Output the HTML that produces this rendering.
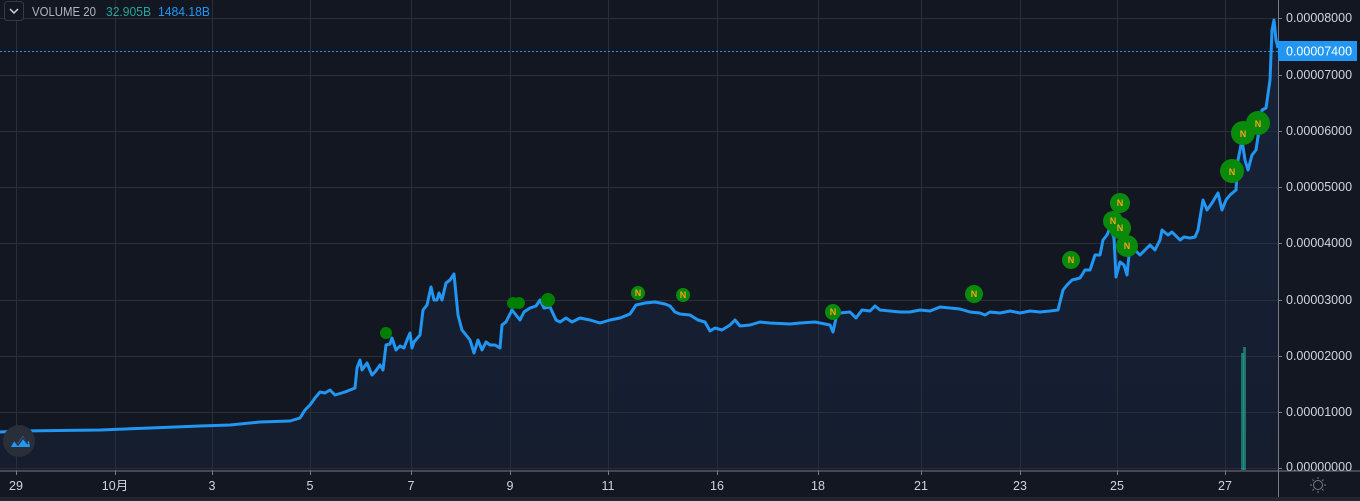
<!DOCTYPE html>
<html><head><meta charset="utf-8"><style>
html,body{margin:0;padding:0;background:#131722;width:1360px;height:501px;overflow:hidden}
svg{display:block}
text{font-family:"Liberation Sans","Noto Sans CJK JP",sans-serif}
</style></head><body>
<svg width="1360" height="501" viewBox="0 0 1360 501" xmlns="http://www.w3.org/2000/svg">
<defs>
<linearGradient id="g" x1="0" y1="0" x2="0" y2="1">
<stop offset="0" stop-color="#17233a"/>
<stop offset="1" stop-color="#151d2e"/>
</linearGradient>
</defs>
<rect width="1360" height="501" fill="#131722"/>
<path id="p" fill="url(#g)" d="M0,432 L20,431 100,430 150,428 200,426 230,425 260,422 290,421 300,418 305,410 310,405 315,398 320,392 325,393 330,390 335,395 345,392 355,388 357,368 360,360 362,370 367,363 372,375 375,372 380,365 383,370 386,345 390,344 392,338 396,350 400,346 404,348 407,340 410,333 412,348 414,342 420,335 423,310 427,305 431,287 434,300 437,300 439,293 442,300 446,283 450,280 454,274 458,315 462,330 466,335 470,340 474,353 478,340 482,350 486,342 490,345 495,345 500,348 502,325 506,322 512,310 516,315 520,320 524,312 530,308 536,306 540,300 544,308 550,307 556,320 560,322 566,318 572,322 580,318 590,320 600,323 610,320 620,318 630,314 636,305 645,303 655,302 665,304 670,306 675,312 680,314 690,315 698,320 705,322 710,331 715,328 722,330 730,325 735,320 740,326 750,325 760,322 770,323 790,324 800,323 815,322 830,325 833,332 836,318 840,313 850,312 856,318 862,310 870,311 875,306 880,310 890,311 900,312 910,312 920,310 930,311 940,307 950,308 960,309 970,312 980,313 985,315 990,312 1000,313 1010,311 1020,313 1030,311 1040,312 1050,311 1058,310 1063,290 1067,285 1072,280 1080,278 1085,270 1090,270 1095,255 1100,255 1103,240 1107,235 1110,228 1112,232 1114,238 1116,277 1120,262 1124,265 1127,275 1130,245 1135,250 1140,255 1145,250 1150,245 1155,250 1160,240 1162,230 1168,235 1172,232 1177,237 1180,240 1184,237 1190,238 1195,237 1198,230 1203,200 1207,210 1212,203 1218,193 1222,210 1226,200 1230,195 1236,190 1238,160 1242,140 1245,160 1248,170 1252,155 1256,150 1262,110 1266,108 1270,80 1272,30 1274,20 1276,40 1278,48 L1278,470 L0,470 Z"/>
<g stroke="#2a2e39" stroke-width="1">
<line x1="16.5" y1="0" x2="16.5" y2="471"/><line x1="115.5" y1="0" x2="115.5" y2="471"/><line x1="212.5" y1="0" x2="212.5" y2="471"/><line x1="310.5" y1="0" x2="310.5" y2="471"/><line x1="411.5" y1="0" x2="411.5" y2="471"/><line x1="510.5" y1="0" x2="510.5" y2="471"/><line x1="608.5" y1="0" x2="608.5" y2="471"/><line x1="717.5" y1="0" x2="717.5" y2="471"/><line x1="818.5" y1="0" x2="818.5" y2="471"/><line x1="921.5" y1="0" x2="921.5" y2="471"/><line x1="1020.5" y1="0" x2="1020.5" y2="471"/><line x1="1117.5" y1="0" x2="1117.5" y2="471"/><line x1="1225.5" y1="0" x2="1225.5" y2="471"/>
<line x1="0" y1="18.5" x2="1278" y2="18.5"/><line x1="0" y1="75.5" x2="1278" y2="75.5"/><line x1="0" y1="131.5" x2="1278" y2="131.5"/><line x1="0" y1="187.5" x2="1278" y2="187.5"/><line x1="0" y1="243.5" x2="1278" y2="243.5"/><line x1="0" y1="300.5" x2="1278" y2="300.5"/><line x1="0" y1="356.5" x2="1278" y2="356.5"/><line x1="0" y1="412.5" x2="1278" y2="412.5"/><line x1="0" y1="468.5" x2="1278" y2="468.5"/>
</g>
<polyline fill="none" stroke="#2196f3" stroke-width="3" stroke-linejoin="round" points="0,432 20,431 100,430 150,428 200,426 230,425 260,422 290,421 300,418 305,410 310,405 315,398 320,392 325,393 330,390 335,395 345,392 355,388 357,368 360,360 362,370 367,363 372,375 375,372 380,365 383,370 386,345 390,344 392,338 396,350 400,346 404,348 407,340 410,333 412,348 414,342 420,335 423,310 427,305 431,287 434,300 437,300 439,293 442,300 446,283 450,280 454,274 458,315 462,330 466,335 470,340 474,353 478,340 482,350 486,342 490,345 495,345 500,348 502,325 506,322 512,310 516,315 520,320 524,312 530,308 536,306 540,300 544,308 550,307 556,320 560,322 566,318 572,322 580,318 590,320 600,323 610,320 620,318 630,314 636,305 645,303 655,302 665,304 670,306 675,312 680,314 690,315 698,320 705,322 710,331 715,328 722,330 730,325 735,320 740,326 750,325 760,322 770,323 790,324 800,323 815,322 830,325 833,332 836,318 840,313 850,312 856,318 862,310 870,311 875,306 880,310 890,311 900,312 910,312 920,310 930,311 940,307 950,308 960,309 970,312 980,313 985,315 990,312 1000,313 1010,311 1020,313 1030,311 1040,312 1050,311 1058,310 1063,290 1067,285 1072,280 1080,278 1085,270 1090,270 1095,255 1100,255 1103,240 1107,235 1110,228 1112,232 1114,238 1116,277 1120,262 1124,265 1127,275 1130,245 1135,250 1140,255 1145,250 1150,245 1155,250 1160,240 1162,230 1168,235 1172,232 1177,237 1180,240 1184,237 1190,238 1195,237 1198,230 1203,200 1207,210 1212,203 1218,193 1222,210 1226,200 1230,195 1236,190 1238,160 1242,140 1245,160 1248,170 1252,155 1256,150 1262,110 1266,108 1270,80 1272,30 1274,20 1276,40 1278,48"/>
<rect x="1241" y="353" width="3" height="117" fill="#22ab94" fill-opacity="0.6"/>
<rect x="1243" y="347" width="3" height="123" fill="#22ab94" fill-opacity="0.6"/>
<line x1="0" y1="51.5" x2="1278" y2="51.5" stroke="#2196f3" stroke-width="1" stroke-dasharray="2,2"/>
<g fill="#008000">
<circle cx="386" cy="333" r="6"/><circle cx="513" cy="303" r="6"/><circle cx="519" cy="303" r="6"/><circle cx="548" cy="300" r="7"/>
</g>
<g fill="#0a8a0a">
<circle cx="638" cy="293" r="7"/><circle cx="683" cy="295" r="7"/><circle cx="833" cy="312" r="8"/><circle cx="974" cy="294" r="9"/><circle cx="1071" cy="260" r="9"/><circle cx="1120" cy="203" r="10"/><circle cx="1113" cy="221" r="10"/><circle cx="1120" cy="228" r="11"/><circle cx="1127" cy="246" r="11"/><circle cx="1232" cy="171" r="12"/><circle cx="1243" cy="133" r="12"/><circle cx="1258" cy="123" r="12"/>
</g>
<g fill="#f7a21b" font-size="9" font-weight="bold" text-anchor="middle">
<text x="638" y="296">N</text><text x="683" y="298">N</text><text x="833" y="315">N</text><text x="974" y="297">N</text><text x="1071" y="263">N</text><text x="1120" y="206">N</text><text x="1113" y="224">N</text><text x="1120" y="231">N</text><text x="1127" y="249">N</text><text x="1232" y="175">N</text><text x="1243" y="137">N</text><text x="1258" y="127">N</text>
</g>
<circle cx="19" cy="441" r="16" fill="#2a2e39"/>
<path d="M10,447 L14,440 L18,443 L23,436 L27,442 L29,441 L30,447 Z" fill="#2196f3"/>
<path d="M10,447 L14,440 L18,445 L23,438 L28,444" fill="none" stroke="#2a2e39" stroke-width="1.5"/>
<rect x="1278" y="0" width="82" height="501" fill="#131722"/>
<line x1="1278.5" y1="0" x2="1278.5" y2="497" stroke="#787b86"/>
<rect x="0" y="470.5" width="1278" height="27" fill="#131722"/>
<line x1="0" y1="471" x2="1278" y2="471" stroke="#787b86"/>
<rect x="0" y="497" width="1360" height="4" fill="#222631"/>
<g stroke="#787b86"><line x1="1278" y1="18.5" x2="1282" y2="18.5"/><line x1="1278" y1="75.5" x2="1282" y2="75.5"/><line x1="1278" y1="131.5" x2="1282" y2="131.5"/><line x1="1278" y1="187.5" x2="1282" y2="187.5"/><line x1="1278" y1="243.5" x2="1282" y2="243.5"/><line x1="1278" y1="300.5" x2="1282" y2="300.5"/><line x1="1278" y1="356.5" x2="1282" y2="356.5"/><line x1="1278" y1="412.5" x2="1282" y2="412.5"/><line x1="1278" y1="468.5" x2="1282" y2="468.5"/>
<line x1="16.5" y1="471" x2="16.5" y2="475"/><line x1="115.5" y1="471" x2="115.5" y2="475"/><line x1="212.5" y1="471" x2="212.5" y2="475"/><line x1="310.5" y1="471" x2="310.5" y2="475"/><line x1="411.5" y1="471" x2="411.5" y2="475"/><line x1="510.5" y1="471" x2="510.5" y2="475"/><line x1="608.5" y1="471" x2="608.5" y2="475"/><line x1="717.5" y1="471" x2="717.5" y2="475"/><line x1="818.5" y1="471" x2="818.5" y2="475"/><line x1="921.5" y1="471" x2="921.5" y2="475"/><line x1="1020.5" y1="471" x2="1020.5" y2="475"/><line x1="1117.5" y1="471" x2="1117.5" y2="475"/><line x1="1225.5" y1="471" x2="1225.5" y2="475"/></g>
<g fill="#d1d4dc" font-size="12.5">
<text x="1286" y="22">0.00008000</text><text x="1286" y="79">0.00007000</text><text x="1286" y="135">0.00006000</text><text x="1286" y="191">0.00005000</text><text x="1286" y="247">0.00004000</text><text x="1286" y="304">0.00003000</text><text x="1286" y="360">0.00002000</text><text x="1286" y="416">0.00001000</text><text x="1286" y="471">0.00000000</text>
</g>
<rect x="1278" y="41" width="79" height="20" fill="#2196f3"/>
<text x="1286" y="55.5" fill="#fff" font-size="12.5">0.00007400</text>
<rect x="1278" y="470.5" width="82" height="26.5" fill="#131722"/>
<line x1="1278" y1="471" x2="1360" y2="471" stroke="#787b86"/>
<line x1="1278.5" y1="471" x2="1278.5" y2="497" stroke="#787b86"/>
<g fill="none" stroke="#787b86" stroke-width="1"><circle cx="1318" cy="485" r="4.5"/><path d="M1318,477v2M1318,491v2M1310,485h2M1324,485h2M1312.5,479.5l1.4,1.4M1322.1,489.1l1.4,1.4M1312.5,490.5l1.4,-1.4M1322.1,480.9l1.4,-1.4"/></g>
<g fill="#d1d4dc" font-size="12.5" text-anchor="middle">
<text x="16" y="490">29</text><text x="115" y="490">10月</text><text x="212" y="490">3</text><text x="310" y="490">5</text><text x="411" y="490">7</text><text x="510" y="490">9</text><text x="608" y="490">11</text><text x="717" y="490">16</text><text x="818" y="490">18</text><text x="921" y="490">21</text><text x="1020" y="490">23</text><text x="1117" y="490">25</text><text x="1225" y="490">27</text>
</g>
<rect x="4.5" y="1.5" width="19" height="19" rx="3" fill="#131722" stroke="#363a45"/>
<path d="M10,9 L14,13 L18,9" fill="none" stroke="#d1d4dc" stroke-width="1.5"/>
<text x="32" y="16" fill="#b2b5be" font-size="13" textLength="64" lengthAdjust="spacingAndGlyphs">VOLUME 20</text>
<text x="106" y="16" fill="#26a69a" font-size="13" textLength="45" lengthAdjust="spacingAndGlyphs">32.905B</text>
<text x="158" y="16" fill="#2196f3" font-size="13" textLength="52" lengthAdjust="spacingAndGlyphs">1484.18B</text>
</svg>
</body></html>
